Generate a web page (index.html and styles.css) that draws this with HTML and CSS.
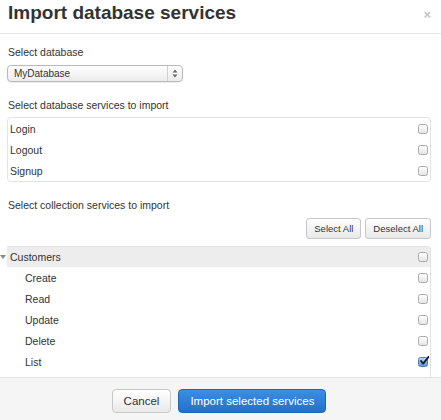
FILE: index.html
```html
<!DOCTYPE html>
<html>
<head>
<meta charset="utf-8">
<link rel="stylesheet" href="styles.css">
</head>
<body>
<div class="modal">
  <div class="modal-header">
    <h3 class="title">Import database services</h3>
    <span class="close">×</span>
  </div>
  <div class="modal-body">
    <div class="label first">Select database</div>
    <div class="select">
      <span class="select-value">MyDatabase</span>
      <span class="select-arrow">
        <svg width="6" height="9" viewBox="0 0 6 9"><path d="M3 0.5 L5.5 3.5 L0.5 3.5 Z M3 8.5 L5.5 5.5 L0.5 5.5 Z" fill="#6a6a6a"/></svg>
      </span>
    </div>
    <div class="label">Select database services to import</div>
    <div class="list">
      <div class="row"><span>Login</span><span class="cb"></span></div>
      <div class="row"><span>Logout</span><span class="cb"></span></div>
      <div class="row"><span>Signup</span><span class="cb"></span></div>
    </div>
    <div class="label second">Select collection services to import</div>
    <div class="actions">
      <button class="btn small">Select All</button>
      <button class="btn small">Deselect All</button>
    </div>
    <div class="tree">
      <div class="tree-inner">
        <div class="row parent"><span>Customers</span><span class="cb"></span></div>
        <div class="row child"><span>Create</span><span class="cb"></span></div>
        <div class="row child"><span>Read</span><span class="cb"></span></div>
        <div class="row child"><span>Update</span><span class="cb"></span></div>
        <div class="row child"><span>Delete</span><span class="cb"></span></div>
        <div class="row child"><span>List</span><span class="cb checked"><svg width="10" height="10" viewBox="0 0 10 10"><path d="M2 5 L4.2 7.6 L9.6 0.8" fill="none" stroke="#1a1a2a" stroke-width="1.8" stroke-linecap="round" stroke-linejoin="round"/></svg></span></div>
      </div>
    </div>
  </div>
  <div class="modal-footer">
    <button class="btn footer-btn">Cancel</button>
    <button class="btn footer-btn primary">Import selected services</button>
  </div>
</div>
</body>
</html>
```

FILE: styles.css
```css
* { box-sizing: border-box; }
html, body { margin: 0; padding: 0; }
body {
  font-family: "Liberation Sans", Arial, sans-serif;
  font-size: 10.5px;
  color: #333;
  background: #fff;
  width: 441px;
  height: 420px;
  overflow: hidden;
}
.modal {
  height: 420px;
  display: flex;
  flex-direction: column;
}
.modal-header {
  display: flex;
  justify-content: space-between;
  align-items: flex-start;
  height: 34px;
  padding: 2px 10px 0 8px;
  border-bottom: 1px solid #e8e8e8;
}
.title {
  margin: 0;
  font-size: 19px;
  line-height: 22px;
  font-weight: bold;
  color: #333;
}
.close {
  font-size: 13px;
  font-weight: bold;
  color: #c4c4c4;
  line-height: 14px;
  margin-top: 6px;
}
.modal-body {
  flex: 1;
  min-height: 0;
  display: flex;
  flex-direction: column;
  padding: 0 10px 0 7px;
}
.label {
  line-height: 14px;
  height: 14px;
  padding-left: 1px;
  margin-top: 16px;
}
.label.first { margin-top: 11px; }
.label.second { margin-top: 16px; }
.select {
  margin-top: 6px;
  width: 176px;
  height: 17px;
  display: flex;
  border: 1px solid #b9b9b9;
  border-radius: 4px;
  background: linear-gradient(#ffffff, #ececec);
  box-shadow: 0 1px 1px rgba(0,0,0,0.08);
}
.select-value {
  flex: 1;
  font-size: 10px;
  line-height: 15px;
  padding-left: 6px;
  color: #333;
}
.select-arrow {
  width: 15px;
  border-left: 1px solid #d0d0d0;
  display: flex;
  align-items: center;
  justify-content: center;
}
.list {
  margin-top: 5px;
  border: 1px solid #e3e3e3;
  border-radius: 4px;
}
.row {
  height: 21px;
  display: flex;
  align-items: center;
  justify-content: space-between;
  padding: 0 2px 0 2px;
}
.cb {
  width: 10px;
  height: 10px;
  border: 1px solid #ababab;
  border-radius: 2.5px;
  background: linear-gradient(#ffffff, #e4e4e4);
  display: flex;
  align-items: center;
  justify-content: center;
}
.cb.checked {
  background: linear-gradient(#b9d3f0, #5f97d8);
  border-color: #4f7fb8;
  overflow: visible;
}
.cb.checked svg { flex: none; margin-top: -1px; margin-left: 1px; }
.actions {
  margin-top: 6px;
  display: flex;
  justify-content: flex-end;
  gap: 4px;
}
.btn {
  font-family: "Liberation Sans", Arial, sans-serif;
  color: #333;
  border: 1px solid #c8c8c8;
  border-radius: 3px;
  background: linear-gradient(#ffffff, #e9e9e9);
  cursor: pointer;
  margin: 0;
}
.btn.small {
  height: 21px;
  font-size: 9.5px;
  padding: 0 7px;
}
.tree {
  margin-top: 7px;
  margin-left: -7px;
  padding-left: 7px;
  flex: 1;
  min-height: 0;
  overflow: hidden;
}
.tree-inner {
  height: 100%;
  border-top: 1px solid #e3e3e3;
  border-right: 1px solid #e3e3e3;
  border-radius: 0 4px 0 0;
}
.tree .row.parent {
  position: relative;
  height: 20px;
  background: #ededed;
  padding-left: 3px;
  border-radius: 0 3px 0 0;
}
.tree .row.parent::before {
  content: "";
  position: absolute;
  left: -7px;
  top: 8px;
  border-left: 3px solid transparent;
  border-right: 3px solid transparent;
  border-top: 4px solid #8a8a8a;
}
.tree .row.child { padding-left: 18px; }
.modal-footer {
  height: 43px;
  flex: none;
  background: #f5f5f5;
  border-top: 1px solid #e2e2e2;
  display: flex;
  justify-content: center;
  align-items: flex-start;
  gap: 7px;
  padding-top: 11px;
  padding-right: 3px;
}
.footer-btn {
  height: 24px;
  font-size: 11.5px;
  padding: 0 11px;
  border-radius: 4px;
}
.btn.primary {
  color: #fff;
  border-color: #1f68b8;
  background: linear-gradient(#3a8fe3, #2470c8);
  padding: 0 11px;
}
```
